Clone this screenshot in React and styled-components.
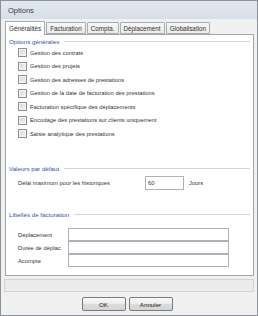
import React from 'react';
import styled, { createGlobalStyle } from 'styled-components';

const Global = createGlobalStyle`
  html, body { margin: 0; padding: 0; background: #fff; }
  body { font-family: 'Liberation Sans', Arial, sans-serif; }
`;

const Window = styled.div`
  width: 258px;
  height: 316px;
  box-sizing: border-box;
  border: 1px solid #8c9299;
  background: #f0f0f0;
  display: flex;
  flex-direction: column;
`;

const TitleBar = styled.div`
  height: 18px;
  flex: none;
  display: flex;
  align-items: center;
  padding-left: 7px;
  font-size: 7.5px;
  color: #3c3c3c;
  background: linear-gradient(#e3e9f0, #d6dfe8);
`;

const Body = styled.div`
  flex: 1;
  display: flex;
  flex-direction: column;
  padding: 1px 3px 0 3px;
`;

const Tabs = styled.div`
  display: flex;
  align-items: flex-end;
  height: 14px;
  padding-left: 1px;
  position: relative;
  z-index: 1;
`;

const Tab = styled.div`
  height: ${({ active }) => (active ? '14px' : '12px')};
  box-sizing: border-box;
  padding: 0 3px;
  margin-right: 1px;
  display: flex;
  align-items: center;
  font-size: 6.3px;
  color: #333;
  border: 1px solid #a9acb2;
  border-bottom: ${({ active }) => (active ? 'none' : '1px solid #a9acb2')};
  background: ${({ active }) => (active ? '#fff' : 'linear-gradient(#f6f6f6, #ebebeb)')};
  border-radius: 1px 1px 0 0;
  margin-bottom: ${({ active }) => (active ? '-1px' : '0')};
`;

const Panel = styled.div`
  height: 242px;
  box-sizing: border-box;
  background: #fff;
  border: 1px solid #a3a7ad;
  margin-left: 1px;
  padding: 1px 3px 0 3px;
  display: flex;
  flex-direction: column;
`;

const Section = styled.div`
  display: flex;
  flex-direction: column;
  margin-top: ${({ top }) => top}px;
`;

const SectionTitle = styled.div`
  display: flex;
  align-items: center;
  height: 10px;
  font-size: 6.2px;
  color: #2756b0;
  gap: 5px;
  &::after {
    content: '';
    flex: 1;
    height: 1px;
    background: #d5d5d5;
  }
`;

const CheckList = styled.div`
  display: flex;
  flex-direction: column;
  padding: 2px 0 0 9px;
  gap: 4.5px;
`;

const CheckRow = styled.label`
  display: flex;
  align-items: center;
  gap: 3px;
  height: 9px;
  font-size: 5.8px;
  color: #333;
`;

const Box = styled.span`
  width: 9px;
  height: 9px;
  box-sizing: border-box;
  border: 1px solid #8f8f8f;
  background: linear-gradient(135deg, #d8d8d8, #f4f4f4);
  box-shadow: inset 0 0 0 1px #f3f3f3;
`;

const FieldRow = styled.div`
  display: flex;
  align-items: center;
  font-size: 5.8px;
  color: #333;
  padding-left: 9px;
  height: ${({ h }) => h || 13}px;
`;

const Label = styled.span`
  width: ${({ w }) => w}px;
  flex: none;
`;

const Input = styled.div`
  width: ${({ w }) => w}px;
  height: ${({ h }) => h || 13}px;
  box-sizing: border-box;
  border: 1px solid #aeb2b8;
  background: #fff;
  display: flex;
  align-items: center;
  padding-left: 2px;
  font-size: 5.8px;
  color: #333;
`;

const Unit = styled.span`
  margin-left: 5px;
`;

const StatusBar = styled.div`
  height: 13px;
  margin: 3px 0 0 0;
  box-sizing: border-box;
  border: 1px solid #d3d3d3;
  background: #ebebeb;
`;

const ButtonBar = styled.div`
  display: flex;
  justify-content: center;
  gap: 3px;
  margin-top: 5px;
  padding-right: 4px;
`;

const Button = styled.div`
  width: 44px;
  height: 14px;
  box-sizing: border-box;
  border: 1px solid #7a7a7a;
  border-radius: 2px;
  background: linear-gradient(#f8f8f8 0%, #ececec 50%, #dcdcdc 51%, #d4d4d4 100%);
  display: flex;
  align-items: center;
  justify-content: center;
  font-size: 6.2px;
  color: #222;
`;

const options = [
  'Gestion des contrats',
  'Gestion des projets',
  'Gestion des adresses de prestations',
  'Gestion de la date de facturation des prestations',
  'Facturation spécifique des déplacements',
  'Encodage des prestations sur clients uniquement',
  'Saisie analytique des prestations',
];

const tabs = ['Généralités', 'Facturation', 'Compta.', 'Déplacement', 'Globalisation'];

export default function App() {
  return (
    <>
      <Global />
      <Window>
        <TitleBar>Options</TitleBar>
        <Body>
          <Tabs>
            {tabs.map((t, i) => (
              <Tab key={t} active={i === 0}>{t}</Tab>
            ))}
          </Tabs>
          <Panel>
            <Section top={0}>
              <SectionTitle>Options générales</SectionTitle>
              <CheckList>
                {options.map((o) => (
                  <CheckRow key={o}>
                    <Box />
                    {o}
                  </CheckRow>
                ))}
              </CheckList>
            </Section>
            <Section top={25}>
              <SectionTitle>Valeurs par défaut</SectionTitle>
              <FieldRow h={20}>
                <Label w={127}>Délai maximum pour les historiques</Label>
                <Input w={39} h={14}>60</Input>
                <Unit>Jours</Unit>
              </FieldRow>
            </Section>
            <Section top={16}>
              <SectionTitle>Libellés de facturation</SectionTitle>
              <FieldRow h={9} />
              <FieldRow>
                <Label w={50}>Déplacement</Label>
                <Input w={161} />
              </FieldRow>
              <FieldRow>
                <Label w={50}>Durée de déplac.</Label>
                <Input w={161} />
              </FieldRow>
              <FieldRow>
                <Label w={50}>Acompte</Label>
                <Input w={161} />
              </FieldRow>
            </Section>
          </Panel>
          <StatusBar />
          <ButtonBar>
            <Button>OK</Button>
            <Button>Annuler</Button>
          </ButtonBar>
        </Body>
      </Window>
    </>
  );
}
